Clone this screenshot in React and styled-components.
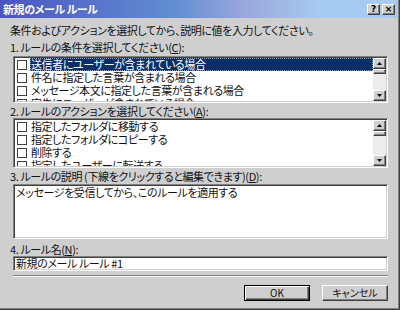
import React from 'react';
import styled, { createGlobalStyle } from 'styled-components';

const GlobalStyle = createGlobalStyle`
    body {
        margin: 0;
        background: #cfcfcf;
    }
    * {
        box-sizing: border-box;
    }
`;

const Window = styled.div`
    width: 400px;
    height: 310px;
    background: #cfcfcf;
    box-shadow: inset -1px -1px #404040, inset -2px -2px #808080;
    font-family: 'Noto Sans CJK JP', 'Noto Sans', sans-serif;
    font-size: 11px;
    letter-spacing: -0.4px;
    font-feature-settings: 'palt';
    color: #111;
    display: flex;
    flex-direction: column;
`;

const TitleBar = styled.div`
    height: 18px;
    margin-right: 2px;
    background: linear-gradient(to right, #4a54c4, #6390d2 45%, #9aa8dc 62%, #a6caf0 80%);
    display: flex;
    align-items: center;
    justify-content: space-between;
    padding: 0 3px 0 3px;
`;

const Title = styled.span`
    color: #fff;
    font-weight: bold;
    line-height: 18px;
`;

const TitleButtons = styled.div`
    display: flex;
    gap: 2px;
`;

const CaptionButton = styled.div`
    width: 13px;
    height: 11px;
    background: #cfcfcf;
    border: 1px solid;
    border-color: #fff #404040 #404040 #fff;
    box-shadow: inset -1px -1px #808080;
    font: bold 9px 'DejaVu Sans', sans-serif;
    letter-spacing: 0;
    line-height: 9px;
    text-align: center;
    color: #000;
`;

const Content = styled.div`
    padding: 0 12px 0 10px;
    display: flex;
    flex-direction: column;
`;

const Text = styled.div`
    line-height: 13px;
    height: 13px;
    margin-top: ${(p) => p.mt}px;
    white-space: nowrap;
`;

const Key = styled.span`
    text-decoration: underline;
`;

const Sunken = styled.div`
    margin-left: 3px;
    margin-top: ${(p) => p.mt}px;
    height: ${(p) => p.h}px;
    background: #fff;
    border: 1px solid;
    border-color: #808080 #fff #fff #808080;
    box-shadow: inset 1px 1px #404040, inset -1px -1px #cfcfcf;
    padding: 1px;
    overflow: hidden;
`;

const ListBody = styled.div`
    display: flex;
    height: 100%;
`;

const Items = styled.div`
    flex: 1;
    overflow: hidden;
`;

const Item = styled.div`
    display: flex;
    align-items: center;
    height: 13px;
    white-space: nowrap;
`;

const CheckBox = styled.span`
    width: 10px;
    height: 10px;
    margin: 0 3px 0 2px;
    border: 1px solid #404040;
    background: #fff;
    flex: none;
`;

const ItemLabel = styled.span`
    flex: 1;
    line-height: 13px;
    height: 13px;
    padding-left: 1px;
    color: ${(p) => (p.selected ? '#fff' : '#111')};
    background: ${(p) => (p.selected ? '#0b2f64' : 'transparent')};
    outline: ${(p) => (p.selected ? '1px dotted #8aa0c0' : 'none')};
    outline-offset: -1px;
`;

const ScrollBar = styled.div`
    width: 13px;
    display: flex;
    flex-direction: column;
    background: #ececec;
`;

const ArrowButton = styled.div`
    height: 11px;
    background: #cfcfcf;
    border: 1px solid;
    border-color: #fff #404040 #404040 #fff;
    box-shadow: inset -1px -1px #808080;
    display: flex;
    align-items: center;
    justify-content: center;
    flex: none;
`;

const Thumb = styled(ArrowButton)`
    height: 5px;
`;

const Track = styled.div`
    flex: 1;
`;

const Arrow = ({ down }) => (
    <svg width="5" height="3" viewBox="0 0 5 3">
        <path d={down ? 'M0 0H5L2.5 3Z' : 'M0 3H5L2.5 0Z'} fill="#000" />
    </svg>
);

const Description = styled.div`
    line-height: 13px;
    padding-left: 1px;
    white-space: nowrap;
`;

const Input = styled(Sunken)`
    line-height: 11px;
    padding: 1px 2px;
    white-space: nowrap;
`;

const Separator = styled.div`
    margin-top: 4px;
    margin-left: 3px;
    height: 2px;
    border-top: 1px solid #808080;
    border-bottom: 1px solid #fff;
`;

const ButtonRow = styled.div`
    display: flex;
    justify-content: flex-end;
    gap: 12px;
    margin-top: 8px;
`;

const Button = styled.div`
    width: 66px;
    height: 16px;
    background: #cfcfcf;
    border: 1px solid;
    border-color: ${(p) => (p.primary ? '#000' : '#fff #404040 #404040 #fff')};
    box-shadow: ${(p) =>
        p.primary
            ? 'inset 1px 1px #fff, inset -1px -1px #404040, inset -2px -2px #808080'
            : 'inset -1px -1px #808080'};
    text-align: center;
    line-height: 14px;
    font-size: 10px;
    letter-spacing: 0;
`;

const List = ({ items, height, mt, selectFirst }) => (
    <Sunken h={height} mt={mt}>
        <ListBody>
            <Items>
                {items.map((text, i) => (
                    <Item key={text}>
                        <CheckBox />
                        <ItemLabel selected={selectFirst && i === 0}>{text}</ItemLabel>
                    </Item>
                ))}
            </Items>
            <ScrollBar>
                <ArrowButton>
                    <Arrow />
                </ArrowButton>
                <Thumb />
                <Track />
                <ArrowButton>
                    <Arrow down />
                </ArrowButton>
            </ScrollBar>
        </ListBody>
    </Sunken>
);

const conditions = [
    '送信者にユーザーが含まれている場合',
    '件名に指定した言葉が含まれる場合',
    'メッセージ本文に指定した言葉が含まれる場合',
    '宛先にユーザーが含まれている場合',
];

const actions = [
    '指定したフォルダに移動する',
    '指定したフォルダにコピーする',
    '削除する',
    '指定したユーザーに転送する',
];

const App = () => (
    <>
        <GlobalStyle />
        <Window>
            <TitleBar>
                <Title>新規のメール ルール</Title>
                <TitleButtons>
                    <CaptionButton>?</CaptionButton>
                    <CaptionButton>×</CaptionButton>
                </TitleButtons>
            </TitleBar>
            <Content>
                <Text mt={6}>条件およびアクションを選択してから、説明に値を入力してください。</Text>
                <Text mt={4}>
                    1. ルールの条件を選択してください(<Key>C</Key>):
                </Text>
                <List items={conditions} height={47} mt={2} selectFirst />
                <Text mt={2}>
                    2. ルールのアクションを選択してください(<Key>A</Key>):
                </Text>
                <List items={actions} height={50} mt={0} />
                <Text mt={2}>
                    3. ルールの説明 (下線をクリックすると編集できます)(<Key>D</Key>):
                </Text>
                <Sunken h={55} mt={1}>
                    <Description>メッセージを受信してから、このルールを適用する</Description>
                </Sunken>
                <Text mt={4}>
                    4. ルール名(<Key>N</Key>):
                </Text>
                <Input h={15} mt={0}>
                    新規のメール ルール #1
                </Input>
                <Separator />
                <ButtonRow>
                    <Button primary>OK</Button>
                    <Button>キャンセル</Button>
                </ButtonRow>
            </Content>
        </Window>
    </>
);

export default App;
